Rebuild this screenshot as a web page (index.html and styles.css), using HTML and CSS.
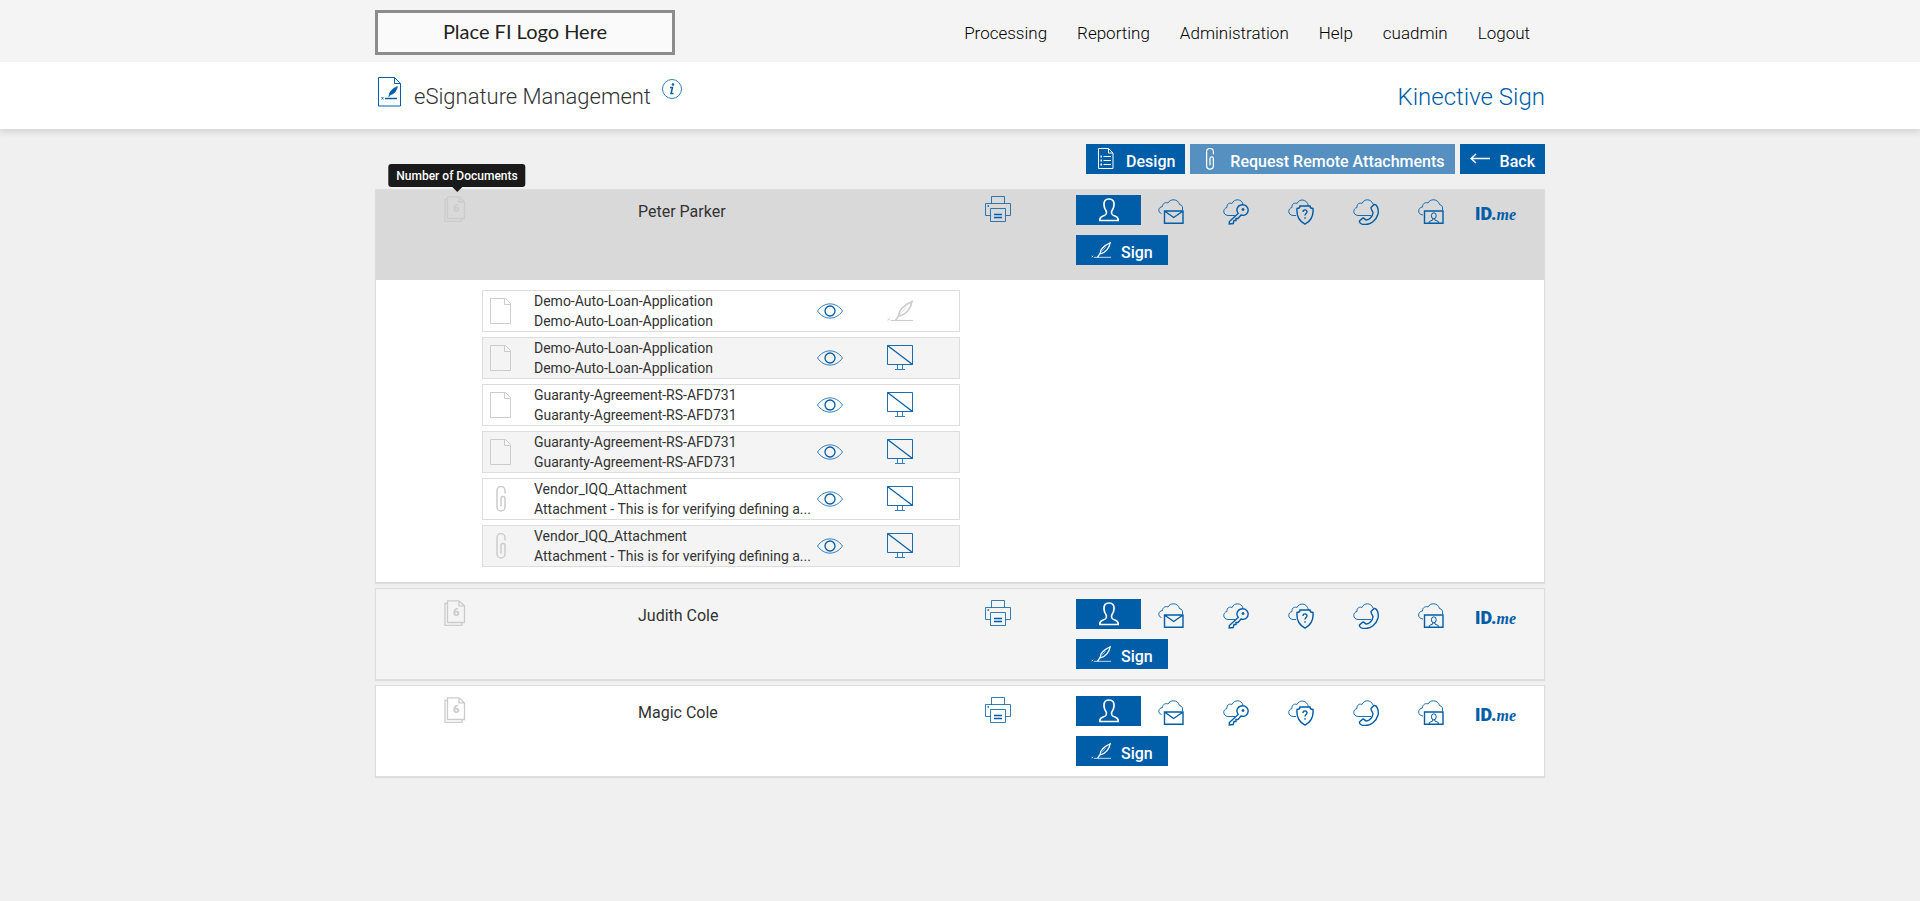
FILE: index.html
```html
<!DOCTYPE html>
<html lang="en">
<head>
  <meta charset="UTF-8">
  <meta name="viewport" content="width=device-width, initial-scale=1.0">
  <title>eSignature Management</title>
  <link rel="stylesheet" href="styles.css">
</head>
<body>
  <!-- Icon sprite -->
  <svg class="sprite" aria-hidden="true">
    <symbol id="i-page-sign" viewBox="0 0 24 30">
      <path d="M.5.500h16l6 6v22.500h-22zM16.500.500v6h6"/>
      <path d="M7 21.500h12" stroke-width="1.500"/>
      <path d="M3.500 20l2 2.500m0-2.500l-2 2.500" stroke-width=".8"/>
      <path d="M11 19.500c0-5 3.500-8 8.500-10-1 4-3 7.500-7.500 8.500l-1.500 2" fill="currentColor" stroke-width=".6"/>
    </symbol>
    <symbol id="i-info" viewBox="0 0 20 20">
      <circle cx="10" cy="10" r="9.500" stroke-width=".8"/>
      <path d="M8 8.500h2.500L9 14.500h2.500" stroke-width="1.500"/>
      <circle cx="11" cy="5.500" r="1" fill="currentColor" stroke-width=".6"/>
    </symbol>
    <symbol id="i-design" viewBox="0 0 20 22">
      <path d="M2.500.500h10l4.500 4.500v15.500h-14.500zM12.500.500v4.500h4.500"/>
      <path d="M7.500 8.500h7.500M7.500 12.500h7.500M7.500 16.500h7.500" stroke-width="1.200"/>
      <path d="M4.500 8.500h1.500M4.500 12.500h1.500M4.500 16.500h1.500" stroke-width="2"/>
    </symbol>
    <symbol id="i-clip" viewBox="0 0 10 26">
      <path d="M9 7.500V4.500a4 4 0 0 0-8 0v16.500a4 4 0 0 0 8 0v-8.500a2 2 0 0 0-4 0v8" stroke-width="1.500"/>
    </symbol>
    <symbol id="i-back" viewBox="0 0 20 12">
      <path d="M20 5.500H1M6 1L1 5.500 6 10" stroke-width="1.500"/>
    </symbol>
    <symbol id="i-count" viewBox="0 0 22 26">
      <path d="M3.500 3.500h-2.500v22h17v-2.500" stroke-width="1.300"/>
      <path d="M3.500.8h11.500l5.500 5v16.700h-17zM15 .8v5h5.500" stroke-width="1.300"/>
    </symbol>
    <symbol id="i-print" viewBox="0 0 26 26">
      <path d="M6.500 7.500v-7h13v7M5.500 19.500h-5v-12h25v12h-5" stroke-width=".8"/>
      <path d="M5.500 12.500h15v13h-15z" stroke-width=".8"/>
      <path d="M9 18.500h8M9 21.500h8" stroke-width="1.300"/>
      <path d="M2.500 10h1.500" stroke-width="1.500"/>
    </symbol>
    <symbol id="i-person" viewBox="0 0 20 24">
      <path d="M10 1C6 1 4.800 3.500 5 7c.1 3 1 4.500 2.300 6.200.6 3-.3 3.900-3.300 4.800-2.500.8-3.500 2-3.200 4.500h18.400c.3-2.500-.7-3.700-3.200-4.500-3-.9-3.900-1.800-3.300-4.800C14 11.500 14.900 10 15 7c.2-3.500-1-6-5-6z" stroke-width="1.700"/>
    </symbol>
    <symbol id="i-quill" viewBox="0 0 26 22">
      <path d="M4 20.500h22"/>
      <path d="M.8 18.500l2 2m0-2l-2 2"/>
      <path d="M8.500 20.500l3.500-5.500c-.5-4 5-10 13-13.500-1 6-5.500 13-13 14.500" stroke-width="1.600"/>
      <path d="M13 14l6-6.500" stroke-width=".7"/>
    </symbol>
    <symbol id="i-mail" viewBox="0 0 26 26">
      <path d="M3.500 14.500C-.5 13.500 0 8 4.500 7.500 4.500 4 8 3 10 4 12-.5 20-.5 21.500 5.500c2.500.5 3.500 2.500 3 5.500" stroke-width=".9"/>
      <path d="M6.500 12h18.500v12.200h-18.500zM6.500 12l9.200 6.500L25 12" stroke-width="1.400"/>
    </symbol>
    <symbol id="i-key" viewBox="0 0 26 26">
      <path d="M12 16.500H5C-.5 16-.5 9.500 4 8.500 3.500 4.500 7 3.500 9 4.500 11-.5 18.500-.5 20 5" stroke-width=".9"/>
      <path d="M15.200 14.400C12 9.500 15.500 5.800 19.800 5.800c3.200 0 5.400 2.500 5.400 5.200 0 4-3.700 6.300-7.200 5L15 19.500h-2v2h-2l-.8 3-4 .5.200-2.500z" stroke-width="1.400"/>
      <circle cx="20" cy="10.500" r="1" fill="currentColor"/>
    </symbol>
    <symbol id="i-shield" viewBox="0 0 26 26">
      <path d="M8 16.500H5C-.5 16-.5 9.500 4 8.500 3.500 4.500 7 3.500 9 4.500 11-.5 19-.5 20.500 7" stroke-width=".9"/>
      <path d="M12 7h10c0 1.800 1 2.500 3 2.500.6 6.500-2 12.500-8 15.700-6-3.200-8.600-9.200-8-15.700 2 0 3-.7 3-2.500z" stroke-width="1.400"/>
      <path d="M15 13c0-3 4.200-2.700 4 0-.2 1.500-2 1.500-2 3.500M17 18.200v1.600" stroke-width="1.400"/>
    </symbol>
    <symbol id="i-phone" viewBox="0 0 26 26">
      <path d="M18 16.500H5C-.5 16-.5 9.500 4 8.500 3.500 4.500 7 3.500 9 4.500 11-.5 18-.5 20 5" stroke-width=".9"/>
      <path d="M18 8.500l3-3c3-.5 5 5 4 9.500-1.500 6-7.500 11-13.500 10.500-3 0-5.500-1.500-5-3.500l3.500-3c2 0 1.500 2 3.500 2 3 0 6-3.500 6.500-7 0-2-2-2.500-2-5.500z" stroke-width="1.400"/>
    </symbol>
    <symbol id="i-idcard" viewBox="0 0 26 26">
      <path d="M5 16C-1 15.500-.5 8.500 4.500 8 4.500 4 8 3 10 4 12-.5 20-.5 21.500 5.500c2.500.5 3.500 2.500 3 5.500" stroke-width=".9"/>
      <path d="M6.500 12h18.500v12.200h-18.500z" stroke-width="1.400"/>
      <ellipse cx="15.800" cy="16.800" rx="2.400" ry="3"/>
      <path d="M14.800 19.500v1.500l-3.500 1.500v1.500M16.800 19.500v1.500l3.500 1.500v1.500"/>
    </symbol>
    <symbol id="i-file" viewBox="0 0 22 26">
      <path d="M.5.500h15l5 5v20H.5zM14.500.500v6h6"/>
    </symbol>
    <symbol id="i-eye" viewBox="0 0 26 16">
      <path d="M.5 8C7-1.500 19-1.500 25.500 8 19 17.500 7 17.500.5 8z" stroke-width=".8"/>
      <circle cx="13" cy="8" r="5" stroke-width="1.300"/>
    </symbol>
    <symbol id="i-screen" viewBox="0 0 26 26">
      <path d="M.5.500h25v19H.5z" stroke-width=".9"/>
      <path d="M.5.500l25 19" stroke-width="1.200"/>
      <path d="M10.500 19.500v4.500M15.500 19.500v4.500M8 24.500h10" stroke-width=".8"/>
    </symbol>
  </svg>

  <header class="topbar">
    <div class="container topbar-inner">
      <div class="logo">Place FI Logo Here</div>
      <nav class="menu">
        <a href="#">Processing</a>
        <a href="#">Reporting</a>
        <a href="#">Administration</a>
        <a href="#">Help</a>
        <a href="#">cuadmin</a>
        <a href="#">Logout</a>
      </nav>
    </div>
  </header>

  <div class="titlebar">
    <div class="container titlebar-inner">
      <svg class="icon title-icon"><use href="#i-page-sign"/></svg>
      <h1>eSignature Management</h1>
      <button class="info-btn" aria-label="Information"><svg class="icon"><use href="#i-info"/></svg></button>
      <span class="product">Kinective Sign</span>
    </div>
  </div>

  <main class="container">
    <div class="toolbar">
      <button class="btn"><svg class="icon"><use href="#i-design"/></svg><span>Design</span></button>
      <button class="btn btn-light"><svg class="icon"><use href="#i-clip"/></svg><span>Request Remote Attachments</span></button>
      <button class="btn"><svg class="icon"><use href="#i-back"/></svg><span>Back</span></button>
    </div>

    <!-- Open signer -->
    <section class="signer open">
      <div class="signer-head">
        <div class="count">
          <svg class="icon"><use href="#i-count"/></svg><span class="count-num">6</span>
          <div class="tooltip" role="tooltip">Number of Documents</div>
        </div>
        <div class="name">Peter Parker</div>
        <button class="print" aria-label="Print"><svg class="icon"><use href="#i-print"/></svg></button>
        <div class="actions">
          <div class="methods">
            <button class="method active" aria-label="In person"><svg class="icon"><use href="#i-person"/></svg></button>
            <button class="method" aria-label="Email"><svg class="icon"><use href="#i-mail"/></svg></button>
            <button class="method" aria-label="Password"><svg class="icon"><use href="#i-key"/></svg></button>
            <button class="method" aria-label="Security question"><svg class="icon"><use href="#i-shield"/></svg></button>
            <button class="method" aria-label="Phone"><svg class="icon"><use href="#i-phone"/></svg></button>
            <button class="method" aria-label="ID check"><svg class="icon"><use href="#i-idcard"/></svg></button>
            <button class="method idme"><b>ID.</b><i>me</i></button>
          </div>
          <button class="btn btn-sign"><svg class="icon"><use href="#i-quill"/></svg><span>Sign</span></button>
        </div>
      </div>

      <ul class="docs">
        <li class="doc">
          <svg class="icon doc-type"><use href="#i-file"/></svg>
          <div class="doc-text"><p>Demo-Auto-Loan-Application</p><p>Demo-Auto-Loan-Application</p></div>
          <button class="view" aria-label="View"><svg class="icon"><use href="#i-eye"/></svg></button>
          <button class="mode muted" aria-label="Sign"><svg class="icon"><use href="#i-quill"/></svg></button>
        </li>
        <li class="doc">
          <svg class="icon doc-type"><use href="#i-file"/></svg>
          <div class="doc-text"><p>Demo-Auto-Loan-Application</p><p>Demo-Auto-Loan-Application</p></div>
          <button class="view" aria-label="View"><svg class="icon"><use href="#i-eye"/></svg></button>
          <button class="mode" aria-label="Screen"><svg class="icon"><use href="#i-screen"/></svg></button>
        </li>
        <li class="doc">
          <svg class="icon doc-type"><use href="#i-file"/></svg>
          <div class="doc-text"><p>Guaranty-Agreement-RS-AFD731</p><p>Guaranty-Agreement-RS-AFD731</p></div>
          <button class="view" aria-label="View"><svg class="icon"><use href="#i-eye"/></svg></button>
          <button class="mode" aria-label="Screen"><svg class="icon"><use href="#i-screen"/></svg></button>
        </li>
        <li class="doc">
          <svg class="icon doc-type"><use href="#i-file"/></svg>
          <div class="doc-text"><p>Guaranty-Agreement-RS-AFD731</p><p>Guaranty-Agreement-RS-AFD731</p></div>
          <button class="view" aria-label="View"><svg class="icon"><use href="#i-eye"/></svg></button>
          <button class="mode" aria-label="Screen"><svg class="icon"><use href="#i-screen"/></svg></button>
        </li>
        <li class="doc">
          <svg class="icon doc-type"><use href="#i-clip"/></svg>
          <div class="doc-text"><p>Vendor_IQQ_Attachment</p><p>Attachment - This is for verifying defining a...</p></div>
          <button class="view" aria-label="View"><svg class="icon"><use href="#i-eye"/></svg></button>
          <button class="mode" aria-label="Screen"><svg class="icon"><use href="#i-screen"/></svg></button>
        </li>
        <li class="doc">
          <svg class="icon doc-type"><use href="#i-clip"/></svg>
          <div class="doc-text"><p>Vendor_IQQ_Attachment</p><p>Attachment - This is for verifying defining a...</p></div>
          <button class="view" aria-label="View"><svg class="icon"><use href="#i-eye"/></svg></button>
          <button class="mode" aria-label="Screen"><svg class="icon"><use href="#i-screen"/></svg></button>
        </li>
      </ul>
    </section>

    <section class="signer alt">
      <div class="signer-head">
        <div class="count"><svg class="icon"><use href="#i-count"/></svg><span class="count-num">6</span></div>
        <div class="name">Judith Cole</div>
        <button class="print" aria-label="Print"><svg class="icon"><use href="#i-print"/></svg></button>
        <div class="actions">
          <div class="methods">
            <button class="method active" aria-label="In person"><svg class="icon"><use href="#i-person"/></svg></button>
            <button class="method" aria-label="Email"><svg class="icon"><use href="#i-mail"/></svg></button>
            <button class="method" aria-label="Password"><svg class="icon"><use href="#i-key"/></svg></button>
            <button class="method" aria-label="Security question"><svg class="icon"><use href="#i-shield"/></svg></button>
            <button class="method" aria-label="Phone"><svg class="icon"><use href="#i-phone"/></svg></button>
            <button class="method" aria-label="ID check"><svg class="icon"><use href="#i-idcard"/></svg></button>
            <button class="method idme"><b>ID.</b><i>me</i></button>
          </div>
          <button class="btn btn-sign"><svg class="icon"><use href="#i-quill"/></svg><span>Sign</span></button>
        </div>
      </div>
    </section>

    <section class="signer">
      <div class="signer-head">
        <div class="count"><svg class="icon"><use href="#i-count"/></svg><span class="count-num">6</span></div>
        <div class="name">Magic Cole</div>
        <button class="print" aria-label="Print"><svg class="icon"><use href="#i-print"/></svg></button>
        <div class="actions">
          <div class="methods">
            <button class="method active" aria-label="In person"><svg class="icon"><use href="#i-person"/></svg></button>
            <button class="method" aria-label="Email"><svg class="icon"><use href="#i-mail"/></svg></button>
            <button class="method" aria-label="Password"><svg class="icon"><use href="#i-key"/></svg></button>
            <button class="method" aria-label="Security question"><svg class="icon"><use href="#i-shield"/></svg></button>
            <button class="method" aria-label="Phone"><svg class="icon"><use href="#i-phone"/></svg></button>
            <button class="method" aria-label="ID check"><svg class="icon"><use href="#i-idcard"/></svg></button>
            <button class="method idme"><b>ID.</b><i>me</i></button>
          </div>
          <button class="btn btn-sign"><svg class="icon"><use href="#i-quill"/></svg><span>Sign</span></button>
        </div>
      </div>
    </section>
  </main>
</body>
</html>
```

FILE: styles.css
```css
:root {
  --blue: #005da8;
  --blue-light: #5590c1;
  --border: #dddddd;
  --muted: #cccccc;
}

* {
  box-sizing: border-box;
}

body {
  margin: 0;
  background-color: #f0f0f0;
  color: #333;
  font-family: Roboto, "Liberation Sans", sans-serif;
  font-size: 14px;
  line-height: 20px;
}

button {
  border: 0;
  padding: 0;
  margin: 0;
  background: none;
  color: var(--blue);
  font-family: inherit;
  cursor: pointer;
}

.sprite {
  display: none;
}

.icon {
  display: block;
  flex: none;
  fill: none;
  stroke: currentColor;
  overflow: visible;
}

.container {
  max-width: 1170px;
  margin: 0 auto;
}

/* Top bar */
.topbar {
  background-color: #f4f4f4;
}

.topbar-inner {
  display: flex;
  justify-content: space-between;
  align-items: center;
  height: 62px;
  padding-top: 3px;
}

.logo {
  width: 300px;
  height: 45px;
  border: 3px solid #8c8c8c;
  background-color: #fafafa;
  color: #222;
  font-family: Lato, sans-serif;
  font-size: 20px;
  line-height: 37px;
  text-align: center;
}

.menu {
  display: flex;
}

.menu a {
  padding: 0 15px;
  color: #000;
  font-size: 17px;
  font-weight: 300;
  text-decoration: none;
}

/* Title bar */
.titlebar {
  background-color: #fff;
  box-shadow: 0 4px 5px rgba(0, 0, 0, 0.1);
}

.titlebar-inner {
  display: flex;
  align-items: flex-start;
  height: 67px;
  padding: 15px 0 0 3px;
}

.title-icon {
  width: 24px;
  height: 30px;
  color: var(--blue);
}

.titlebar h1 {
  margin: 4px 11px 0 12px;
  font-size: 22px;
  font-weight: 300;
  line-height: 32px;
}

.info-btn .icon {
  width: 20px;
  height: 20px;
  margin-top: 2px;
}

.product {
  margin: 4px 0 0 auto;
  color: var(--blue);
  font-size: 24px;
  font-weight: 300;
  line-height: 32px;
}

/* Buttons */
.toolbar {
  display: flex;
  justify-content: flex-end;
  gap: 5px;
  padding: 15px 0;
}

.btn {
  display: flex;
  align-items: center;
  gap: 10px;
  height: 30px;
  padding: 0 10px;
  background-color: var(--blue);
  color: #fff;
  font-size: 16px;
  font-weight: 500;
}

.btn span {
  padding-top: 4px;
}

.btn .icon {
  width: 20px;
  height: 22px;
}

.btn-light {
  background-color: var(--blue-light);
}

.btn-sign {
  padding: 0 15px;
}

/* Signers */
.signer {
  margin-bottom: 5px;
  border: 1px solid var(--border);
  background-color: #fff;
  box-shadow: 0 1px 1px rgba(0, 0, 0, 0.08);
}

.signer.alt {
  background-color: #f4f4f4;
}

.signer-head {
  display: grid;
  grid-template-columns: 194fr 347fr 91fr 468fr;
  align-items: start;
  padding: 10px 0 10px 68px;
}

.open .signer-head {
  padding: 5px 0 15px 68px;
  background-color: #d9d9d9;
}

.count {
  position: relative;
  width: 22px;
  padding-top: 1px;
  color: var(--muted);
}

.count .icon {
  width: 22px;
  height: 26px;
}

.count-num {
  position: absolute;
  top: 4px;
  left: 9px;
  font-size: 11px;
  font-weight: 900;
}

.tooltip {
  position: absolute;
  bottom: 35px;
  left: 13px;
  transform: translateX(-50%);
  padding: 2px 8px 1px;
  border-radius: 3px;
  background-color: #1a1a1a;
  color: #fff;
  font-size: 12px;
  font-weight: 500;
  white-space: nowrap;
}

.tooltip::after {
  content: "";
  position: absolute;
  top: 100%;
  left: 50%;
  margin-left: -5px;
  border: 5px solid transparent;
  border-top-color: #1a1a1a;
}

.name {
  padding-top: 7px;
  font-size: 16px;
}

.print {
  width: 26px;
  padding-top: 1px;
}

.print .icon {
  width: 26px;
  height: 26px;
}

.methods {
  display: flex;
  margin-bottom: 10px;
}

.method {
  width: 65px;
  height: 30px;
  padding: 4px 0 0 17px;
}

.method .icon {
  width: 26px;
  height: 26px;
}

.method.active {
  padding: 0;
  background-color: var(--blue);
  color: #fff;
}

.method.active .icon {
  width: 20px;
  height: 24px;
  margin: 0 auto;
}

.method.idme {
  display: flex;
  align-items: baseline;
  padding: 9px 0 0 9px;
  line-height: 20px;
}

.idme b {
  font-family: Roboto, sans-serif;
  font-size: 18px;
  font-weight: 900;
}

.idme i {
  font-family: "Liberation Serif", serif;
  font-size: 16px;
  font-weight: 700;
}

/* Documents */
.docs {
  display: flex;
  flex-direction: column;
  gap: 5px;
  width: 478px;
  max-width: 100%;
  margin: 0 0 0 106px;
  padding: 10px 0 15px;
  list-style: none;
}

.doc {
  display: flex;
  align-items: center;
  height: 42px;
  padding: 0 46px 0 7px;
  border: 1px solid var(--border);
}

.doc:nth-child(even) {
  background-color: #f4f4f4;
}

.doc-type {
  width: 22px;
  height: 26px;
  color: var(--muted);
}

.doc-text {
  flex: 1;
  min-width: 0;
  margin-left: 22px;
}

.doc-text p {
  margin: 0;
  overflow: hidden;
  white-space: nowrap;
  text-overflow: ellipsis;
}

.view .icon {
  width: 26px;
  height: 16px;
}

.mode {
  margin-left: 44px;
}

.mode .icon {
  width: 26px;
  height: 26px;
}

.mode.muted {
  color: var(--muted);
}
```
